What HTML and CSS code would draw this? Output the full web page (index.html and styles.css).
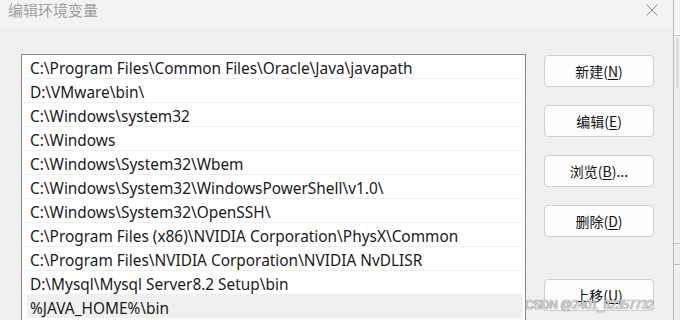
FILE: index.html
```html
<!DOCTYPE html>
<html lang="zh-CN">

<head>
  <meta charset="UTF-8">
  <meta name="viewport" content="width=device-width,initial-scale=1.0">
  <title>编辑环境变量</title>
  <link rel="stylesheet" href="styles.css">
</head>

<body>
  <div class="screen">
    <div class="dialog">
      <div class="titlebar">
        <span class="title">编辑环境变量</span>
        <svg class="close" width="12" height="12" viewBox="0 0 12 12">
          <path d="M0.5 0.5 L11.5 11.5 M11.5 0.5 L0.5 11.5" stroke="#8a8a8a" stroke-width="1" fill="none"/>
        </svg>
      </div>

      <div class="content">
        <ul class="paths">
          <li>C:\Program Files\Common Files\Oracle\Java\javapath</li>
          <li>D:\VMware\bin\</li>
          <li>C:\Windows\system32</li>
          <li>C:\Windows</li>
          <li>C:\Windows\System32\Wbem</li>
          <li>C:\Windows\System32\WindowsPowerShell\v1.0\</li>
          <li>C:\Windows\System32\OpenSSH\</li>
          <li>C:\Program Files (x86)\NVIDIA Corporation\PhysX\Common</li>
          <li>C:\Program Files\NVIDIA Corporation\NVIDIA NvDLISR</li>
          <li>D:\Mysql\Mysql Server8.2 Setup\bin</li>
          <li class="hover">%JAVA_HOME%\bin</li>
        </ul>

        <div class="actions">
          <button>新建(<u>N</u>)</button>
          <button>编辑(<u>E</u>)</button>
          <button>浏览(<u>B</u>)...</button>
          <button>删除(<u>D</u>)</button>
          <button class="move-up">上移(<u>U</u>)</button>
        </div>
      </div>
    </div>

    <!-- window behind the dialog -->
    <div class="behind">
      <div class="behind-top"></div>
      <div class="behind-thumb"></div>
      <div class="behind-lines"></div>
    </div>
  </div>

  <div class="watermark">CSDN @2401_82357732</div>
</body>

</html>
```

FILE: styles.css
```css
body{
  margin: 0;
  background: #f0f0f0;
  font-family: "Noto Sans", "Noto Sans CJK SC", sans-serif;
  overflow: hidden;
}
.screen{
  display: flex;
  height: 320px;
}
.dialog{
  width: 673px;
  background: #f0f0f0;
  border-right: 1px solid #b9b9b9;
}
.titlebar{
  height: 28px;
  background: #f3f3f3;
  display: flex;
  justify-content: space-between;
  align-items: flex-start;
}
.title{
  font-family: "Noto Sans CJK SC", sans-serif;
  font-size: 15px;
  line-height: 17px;
  color: #a0a0a0;
  margin-left: 8px;
  margin-top: 1px;
}
.close{
  margin-top: 4px;
  margin-right: 15px;
}
.content{
  display: flex;
  align-items: flex-start;
  padding: 26px 0 0 21px;
}
.paths{
  list-style: none;
  margin: 0;
  padding: 0 2px 0 0;
  width: 501px;
  height: 276px;
  background: white;
  border: 1px solid #858a92;
  border-bottom: none;
  overflow: hidden;
}
.paths li{
  height: 21px;
  padding-top: 2px;
  line-height: 23px;
  border-bottom: 1px solid #efefef;
  margin-left: 1px;
  padding-left: 7px;
  font-size: 15.4px;
  color: #1a1a1a;
  white-space: nowrap;
}
.paths li.hover{
  background: #f0f0f0;
  margin-left: 5px;
  padding-left: 3px;
  border-bottom: none;
}
.actions{
  display: flex;
  flex-direction: column;
  gap: 18px;
  margin-left: 18px;
  margin-top: 1px;
}
.actions button{
  width: 110px;
  height: 32px;
  background: #fdfdfd;
  border: 1px solid #d0d0d0;
  border-radius: 4px;
  font-family: "Noto Sans CJK SC", sans-serif;
  font-size: 14px;
  color: #111;
  padding: 0;
}
.actions button u{
  text-underline-offset: 2px;
}
.actions .move-up{
  margin-top: 24px;
}
.behind{
  flex: 1;
  background: #f0f0f0;
  display: flex;
  flex-direction: column;
}
.behind-top{
  height: 35px;
  background: #f8f8f8;
  border-bottom: 1px solid #c4c4c4;
}
.behind-thumb{
  height: 50px;
  width: 3px;
  margin-left: 2px;
  margin-top: 2px;
  background: #dcdcdc;
}
.behind-lines{
  margin-top: 155px;
  height: 20px;
  border-top: 1px solid #c4c4c4;
  border-bottom: 1px solid #c4c4c4;
}
.watermark{
  position: absolute;
  left: 525px;
  top: 298px;
  font-family: "Liberation Sans", sans-serif;
  font-size: 12px;
  letter-spacing: -0.4px;
  color: rgba(255, 255, 255, 0.75);
  text-shadow: 0 0 1px #6d6d6d, 0 0 1px #6d6d6d;
}
```
